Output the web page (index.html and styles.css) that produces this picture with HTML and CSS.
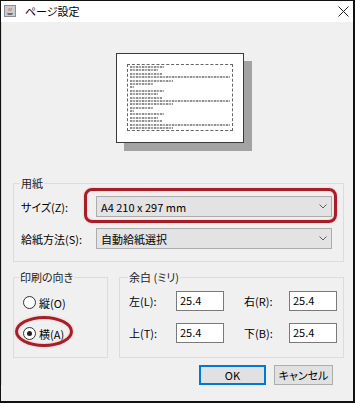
FILE: index.html
```html
<!DOCTYPE html>
<html lang="ja">
<head>
  <meta charset="UTF-8">
  <title>ページ設定</title>
  <link rel="stylesheet" href="styles.css">
</head>
<body>
  <div class="window">
    <div class="titlebar">
      <svg class="app-icon" width="12" height="12" viewBox="0 0 12 12">
        <rect x="0.5" y="0.5" width="11" height="11" fill="#c9cdd3" stroke="#8a8f96"/>
        <path d="M3 8h6l-1 2H4z" fill="#6b6f75"/>
        <path d="M5 3c1 1-1 2 0 3M7 3c1 1-1 2 0 3" stroke="#d0703a" fill="none"/>
      </svg>
      <span class="title">ページ設定</span>
      <svg class="close" width="11" height="11" viewBox="0 0 11 11">
        <path d="M0.5 0.5l10 10M10.5 0.5l-10 10" stroke="#222" stroke-width="1"/>
      </svg>
    </div>

    <div class="content">
      <div class="preview">
        <div class="page">
          <div class="margin-box">
            <i style="width:34px"></i>
            <i style="width:28px"></i>
            <i style="width:32px"></i>
            <i style="width:100px"></i>
            <i style="width:43px"></i>
            <i style="width:23px"></i>
            <i style="width:4px"></i>
            <i style="width:34px"></i>
            <i style="width:28px"></i>
            <i style="width:32px"></i>
            <i style="width:100px"></i>
            <i style="width:43px"></i>
            <i style="width:23px"></i>
            <i style="width:4px"></i>
            <i style="width:34px"></i>
            <i style="width:28px"></i>
            <i style="width:32px"></i>
            <i style="width:100px"></i>
            <i style="width:43px"></i>
          </div>
        </div>
      </div>

      <fieldset class="group paper">
        <legend>用紙</legend>
        <div class="field-row">
          <span class="label">サイズ(Z):</span>
          <div class="select">
            <span>A4 210 x 297 mm</span>
            <svg class="chevron" width="8" height="5" viewBox="0 0 8 5"><path d="M0.5 0.5L4 4L7.5 0.5" stroke="#606060" fill="none"/></svg>
            <div class="mark-rect"></div>
          </div>
        </div>
        <div class="field-row">
          <span class="label">給紙方法(S):</span>
          <div class="select">
            <span>自動給紙選択</span>
            <svg class="chevron" width="8" height="5" viewBox="0 0 8 5"><path d="M0.5 0.5L4 4L7.5 0.5" stroke="#606060" fill="none"/></svg>
          </div>
        </div>
      </fieldset>

      <div class="lower">
        <fieldset class="group orient">
          <legend>印刷の向き</legend>
          <div class="radio-row">
            <span class="radio"></span>
            <span>縦(O)</span>
          </div>
          <div class="radio-row">
            <span class="radio checked"></span>
            <span>横(A)</span>
            <div class="mark-ellipse"></div>
          </div>
        </fieldset>

        <fieldset class="group margins">
          <legend>余白 (ミリ)</legend>
          <div class="margin-grid">
            <span class="label">左(L):</span>
            <div class="input">25.4</div>
            <span class="label">右(R):</span>
            <div class="input">25.4</div>
            <span class="label">上(T):</span>
            <div class="input">25.4</div>
            <span class="label">下(B):</span>
            <div class="input">25.4</div>
          </div>
        </fieldset>
      </div>

      <div class="buttons">
        <button class="btn default">OK</button>
        <button class="btn cancel">キャンセル</button>
      </div>
    </div>
  </div>
</body>
</html>
```

FILE: styles.css
```css
html, body {
  margin: 0;
  padding: 0;
  background: #000;
}

body {
  font-family: "Noto Sans CJK JP", "Noto Sans", sans-serif;
  font-size: 11px;
  font-feature-settings: "palt";
  color: #000;
}

.window {
  width: 355px;
  height: 403px;
  box-sizing: border-box;
  border: 1px solid #111;
  border-right-width: 2px;
  border-bottom-width: 2px;
  background: #f0f0f0;
  overflow: hidden;
}

.titlebar {
  height: 21px;
  background: #fff;
  display: flex;
  align-items: center;
  padding: 0 0 0 3px;
}

.app-icon {
  margin-top: -2px;
}

.title {
  margin-left: 9px;
  font-size: 11px;
  line-height: 21px;
}

.close {
  margin-left: auto;
  margin-right: 4px;
}

.content {
  padding: 0 9px 0 11px;
  border-left: 1px solid #d8d8d8;
}

/* preview */
.preview {
  height: 154px;
  display: flex;
  justify-content: center;
  padding-top: 31px;
  box-sizing: border-box;
}

.page {
  width: 106px;
  height: 67px;
  background: #fff;
  border: 1px solid #3a3a3a;
  box-shadow: 8px 8px 0 #a3a3a3;
  padding: 10px 10px 11px 10px;
  margin-left: 2px;
}

.margin-box {
  height: 100%;
  border: 1px dashed #666;
  box-sizing: border-box;
  padding: 1px 2px;
  display: flex;
  flex-direction: column;
  gap: 1.4px;
  overflow: hidden;
}

.margin-box i {
  display: block;
  height: 2px;
  flex: none;
  background: repeating-linear-gradient(90deg, #909090 0 2px, #d6d6d6 2px 3px, #a8a8a8 3px 5px, #e8e8e8 5px 6px);
}

/* group boxes */
.group {
  margin: 0;
  border: 1px solid #dcdcdc;
  min-width: 0;
}

.group legend {
  padding: 0 1px;
  margin-left: -1px;
  height: 14px;
  line-height: 14px;
  color: #222;
}

.paper {
  padding: 6px 11px 12px 7px;
  display: flex;
  flex-direction: column;
  gap: 11px;
}

.field-row {
  display: flex;
  align-items: center;
}

.field-row .label {
  width: 75px;
  flex: none;
}

.select {
  position: relative;
  flex: 1;
  height: 21px;
  box-sizing: border-box;
  background: #e3e3e3;
  border: 1px solid #acacac;
  display: flex;
  align-items: center;
  padding: 0 4px;
}

.chevron {
  margin-left: auto;
}

.mark-rect {
  position: absolute;
  left: -13px;
  right: -6px;
  top: -9px;
  bottom: -7px;
  border: 3px solid #a61e28;
  border-radius: 8px;
  box-shadow: 0 0 2px #f2a9ad, inset 0 0 2px #f2a9ad;
}

.lower {
  display: flex;
  gap: 11px;
  margin-top: 8px;
}

.orient {
  width: 95px;
  box-sizing: border-box;
  padding: 12px 4px 8px 9px;
  display: flex;
  flex-direction: column;
  gap: 18px;
}

.orient legend {
  margin-left: -4px;
}

.radio-row {
  position: relative;
  display: flex;
  align-items: center;
  gap: 3px;
  height: 13px;
}

.radio {
  width: 11px;
  height: 11px;
  border: 1px solid #333;
  border-radius: 50%;
  background: #fff;
  position: relative;
}

.radio.checked::after {
  content: "";
  position: absolute;
  left: 3px;
  top: 3px;
  width: 5px;
  height: 5px;
  border-radius: 50%;
  background: #222;
}

.mark-ellipse {
  position: absolute;
  left: -8px;
  top: -11px;
  width: 58px;
  height: 31px;
  box-sizing: border-box;
  border: 3px solid #a61e28;
  border-radius: 50%;
  box-shadow: 0 0 2px #f2a9ad, inset 0 0 2px #f2a9ad;
}

.margins {
  flex: 1;
  padding: 7px 8px 14px 9px;
}

.margin-grid {
  display: grid;
  grid-template-columns: 47px 48px 20px 45px 48px;
  row-gap: 12px;
  align-items: center;
}

.margin-grid .label:nth-of-type(2n) {
  grid-column: 4;
}

.input {
  height: 20px;
  box-sizing: border-box;
  background: #fff;
  border: 1px solid #7a7a7a;
  padding: 0 3px;
  line-height: 17px;
}

.buttons {
  display: flex;
  justify-content: flex-end;
  gap: 8px;
  margin-top: 7px;
  padding-right: 11px;
}

.btn {
  height: 20px;
  padding: 0;
  font-family: inherit;
  font-size: 11px;
  font-feature-settings: "palt";
  background: #e1e1e1;
  border: 1px solid #adadad;
  color: #000;
}

.btn.default {
  width: 67px;
  border: 2px solid #0078d7;
}

.btn.cancel {
  width: 59px;
}
```
